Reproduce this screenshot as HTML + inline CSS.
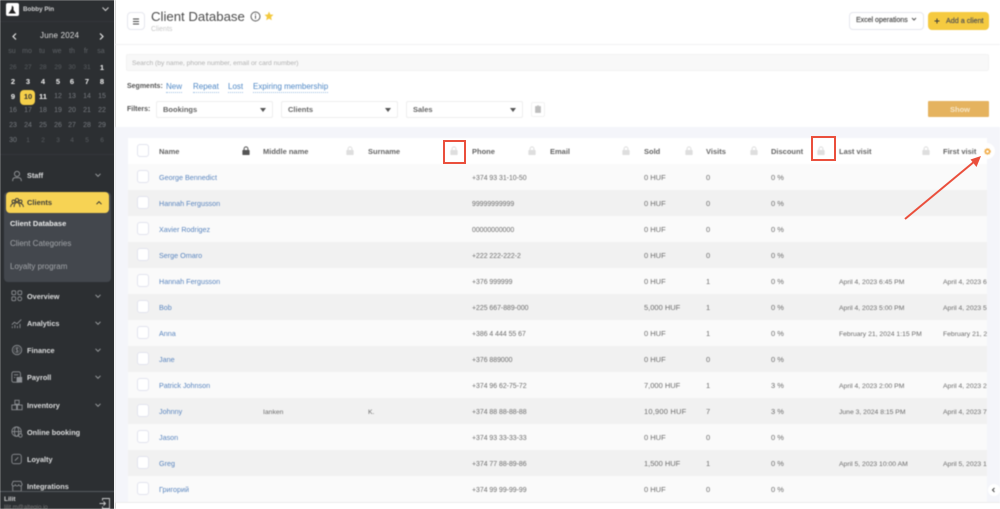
<!DOCTYPE html>
<html><head><meta charset="utf-8"><title>Client Database</title>
<style>
*{box-sizing:border-box;margin:0;padding:0}
html,body{width:1000px;height:509px;overflow:hidden;background:#fff}
body{font-family:"Liberation Sans","Noto Sans CJK SC",sans-serif;position:relative;color:#555}
.t{position:absolute;white-space:nowrap;line-height:12px}
#side{position:absolute;left:0;top:0;width:115px;height:509px;background:#2c2f32;overflow:hidden;filter:blur(.4px)}
#side .t{transform:translateY(-6px)}
.c{width:14px;text-align:center;font-size:7.5px;font-weight:bold;color:#f0f0f0}
.g{color:#777b80;font-weight:normal;font-size:7px}
.h{color:#5e6266;font-weight:normal;font-size:7px}
.m{color:#595d61;font-weight:normal;font-size:6.5px}
.n{font-size:7.3px;font-weight:bold;color:#dadbdc;left:27px;margin-top:1px}
.v{position:absolute;left:95px;width:6px;height:6px}
.ic{position:absolute;left:11px;width:12px;height:12px}
#main{position:absolute;left:0;top:0;width:1000px;height:509px;filter:blur(.4px)}
.row{position:absolute;left:128px;width:859px;height:26px;background:#fafafa;overflow:hidden}
.row.e{background:#f1f1f1}
.row .t{top:8px;font-size:7.5px;color:#6d6d6d}
.row .nm{color:#5b86bf;left:31px;font-size:7.2px}
.row .p{left:344px;font-size:6.9px;top:9px}
.row .d{font-size:6.8px;top:9px}
.cb{position:absolute;left:9px;top:6px;width:12px;height:13px;background:#fff;border:1px solid #e2e3ee;border-radius:3px}
.row .hd{font-size:7.5px;font-weight:bold;color:#666;top:8px}
.lk{position:absolute;top:8px;width:8px;height:9px}
.sel{position:absolute;top:101px;height:17px;background:#fff;border:1px solid #eee;border-radius:2px;font-size:7.5px;font-weight:bold;color:#666;padding:2px 6px;line-height:12px}
.sel i{position:absolute;right:6px;top:6px;border:3.5px solid transparent;border-top:4px solid #555;border-bottom:0}
.seg{position:absolute;top:81px;font-size:8px;color:#4f88c6;border-bottom:1px dotted #9fc0e2;line-height:11px;white-space:nowrap}
</style></head><body>
<svg width="0" height="0" style="position:absolute"><defs>
<symbol id="lock" viewBox="0 0 8 9"><path d="M1 4h6a.6.6 0 0 1 .6.6v3.800a.6.6 0 0 1-.6.6H1a.6.6 0 0 1-.6-.6V4.600A.6.6 0 0 1 1 4z" fill="currentColor"/><path d="M2.100 4V2.800a1.900 1.900 0 0 1 3.800 0V4" fill="none" stroke="currentColor" stroke-width="1"/></symbol>
<symbol id="dn" viewBox="0 0 6 6"><path d="M.5 1.800 3 4.300l2.500-2.500" fill="none" stroke="#9a9da0" stroke-width="1"/></symbol>
</defs></svg>

<div id="side">
<div style="position:absolute;left:6px;top:3px;width:13px;height:13px;background:#fff;border-radius:2px"></div>
<svg style="position:absolute;left:7px;top:4px" width="11" height="11" viewBox="0 0 11 11"><path d="M1.500 9.500 4.500 5l.5-3.500 1.500 1.500V6l2.500 3.500z" fill="#222"/></svg>
<div class="t" style="left:23px;top:10px;font-size:6.300px;font-weight:bold;color:#cfd0d1">Bobby Pin</div>
<svg style="position:absolute;left:102px;top:6px" width="7" height="6" viewBox="0 0 7 6"><path d="M.5 1.500 3.500 4.500 6.500 1.500" fill="none" stroke="#d0d0d0" stroke-width="1"/></svg>
<div style="position:absolute;left:0;top:21px;width:115px;height:1px;background:#33363a"></div>
<svg style="position:absolute;left:12px;top:33px" width="5" height="7" viewBox="0 0 5 7"><path d="M4 .5 1 3.500 4 6.500" fill="none" stroke="#e6e6e6" stroke-width="1.200"/></svg>
<div class="t" style="left:40px;top:36px;font-size:8px;color:#dcdcdc;letter-spacing:.2px">June 2024</div>
<svg style="position:absolute;left:99px;top:33px" width="5" height="7" viewBox="0 0 5 7"><path d="M1 .5 4 3.500 1 6.500" fill="none" stroke="#e6e6e6" stroke-width="1.200"/></svg>

<div class="t c h" style="left:5px;top:52px">su</div><div class="t c h" style="left:20px;top:52px">mo</div><div class="t c h" style="left:35px;top:52px">tu</div><div class="t c h" style="left:50px;top:52px">we</div><div class="t c h" style="left:65px;top:52px">th</div><div class="t c h" style="left:79px;top:52px">fr</div><div class="t c h" style="left:94px;top:52px">sa</div>

<div class="t c m" style="left:6px;top:68px">26</div><div class="t c m" style="left:21px;top:68px">27</div><div class="t c m" style="left:36px;top:68px">28</div><div class="t c m" style="left:51px;top:68px">29</div><div class="t c m" style="left:65px;top:68px">30</div><div class="t c m" style="left:80px;top:68px">31</div><div class="t c" style="left:95px;top:68px">1</div>

<div class="t c" style="left:6px;top:82px">2</div><div class="t c" style="left:21px;top:82px">3</div><div class="t c" style="left:36px;top:82px">4</div><div class="t c" style="left:51px;top:82px">5</div><div class="t c" style="left:65px;top:82px">6</div><div class="t c" style="left:80px;top:82px">7</div><div class="t c" style="left:95px;top:82px">8</div>

<div style="position:absolute;left:20px;top:90px;width:15px;height:15px;background:#f5cf4a;border-radius:4px"></div>
<div class="t c" style="left:6px;top:97px">9</div><div class="t c" style="left:21px;top:97px;color:#333">10</div><div class="t c" style="left:36px;top:97px">11</div><div class="t c g" style="left:51px;top:97px">12</div><div class="t c g" style="left:65px;top:97px">13</div><div class="t c g" style="left:80px;top:97px">14</div><div class="t c g" style="left:95px;top:97px">15</div>

<div class="t c g" style="left:6px;top:111px">16</div><div class="t c g" style="left:21px;top:111px">17</div><div class="t c g" style="left:36px;top:111px">18</div><div class="t c g" style="left:51px;top:111px">19</div><div class="t c g" style="left:65px;top:111px">20</div><div class="t c g" style="left:80px;top:111px">21</div><div class="t c g" style="left:95px;top:111px">22</div>

<div class="t c g" style="left:6px;top:126px">23</div><div class="t c g" style="left:21px;top:126px">24</div><div class="t c g" style="left:36px;top:126px">25</div><div class="t c g" style="left:51px;top:126px">26</div><div class="t c g" style="left:65px;top:126px">27</div><div class="t c g" style="left:80px;top:126px">28</div><div class="t c g" style="left:95px;top:126px">29</div>

<div class="t c g" style="left:6px;top:141px">30</div><div class="t c m" style="left:21px;top:141px">1</div><div class="t c m" style="left:36px;top:141px">2</div><div class="t c m" style="left:51px;top:141px">3</div><div class="t c m" style="left:65px;top:141px">4</div><div class="t c m" style="left:80px;top:141px">5</div><div class="t c m" style="left:95px;top:141px">6</div>
<div style="position:absolute;left:0;top:154px;width:115px;height:1px;background:#33363a"></div>

<svg class="ic" style="top:170px" viewBox="0 0 14 14" fill="none" stroke="#9a9da0"><circle cx="7" cy="4.500" r="3"/><path d="M2 13v-1.500A3 3 0 0 1 5 9h4a3 3 0 0 1 3 3v1"/></svg>
<div class="t n" style="top:175px">Staff</div><svg class="v" style="top:172px"><use href="#dn"/></svg>

<div style="position:absolute;left:4px;top:192px;width:107px;height:90px;background:#43474d;border-radius:4px"></div>
<div style="position:absolute;left:6px;top:192px;width:103px;height:21px;background:#f7d354;border-radius:4px"></div>
<svg style="position:absolute;left:10px;top:196px;width:14px;height:14px" viewBox="0 0 14 14" fill="none" stroke="#3a3a3a" stroke-width=".9"><circle cx="3.500" cy="5.500" r="1.500"/><circle cx="7" cy="4" r="1.600"/><circle cx="10.500" cy="5.500" r="1.500"/><path d="M.5 11c.5-2.500 1.500-3.500 3-3.500M13.500 11c-.5-2.500-1.500-3.500-3-3.500M4 11c.3-3 1.500-4.500 3-4.500s2.700 1.500 3 4.500"/></svg>
<div class="t" style="left:27px;top:203px;font-size:7.500px;font-weight:bold;color:#3c3c38">Clients</div>
<svg style="position:absolute;left:96px;top:200px" width="6" height="6" viewBox="0 0 6 6"><path d="M.5 4.200 3 1.700l2.500 2.500" fill="none" stroke="#333" stroke-width="1"/></svg>
<div class="t" style="left:10px;top:223.500px;font-size:7.500px;font-weight:bold;color:#eceded">Client Database</div>
<div class="t" style="left:10px;top:244px;font-size:8px;color:#a2a5a9">Client Categories</div>
<div class="t" style="left:10px;top:267px;font-size:8px;color:#a2a5a9">Loyalty program</div>

<svg class="ic" style="top:290px" viewBox="0 0 14 14" fill="none" stroke="#8f9296"><rect x="1" y="1" width="4.500" height="4.500" rx="1.200"/><rect x="8" y="1" width="4.500" height="4.500" rx="1.200"/><rect x="1" y="8" width="4.500" height="4.500" rx="1.200"/><circle cx="10.200" cy="10.200" r="2.300"/></svg>
<div class="t n" style="top:296px">Overview</div><svg class="v" style="top:293px"><use href="#dn"/></svg>

<svg class="ic" style="top:317px" viewBox="0 0 14 14" fill="none" stroke="#8f9296"><path d="M1 9l3-3 3 2 5-5M1.500 13v-2M4.500 13V9M7.500 13v-2.500M10.500 13V8"/></svg>
<div class="t n" style="top:323px">Analytics</div><svg class="v" style="top:320px"><use href="#dn"/></svg>

<svg class="ic" style="top:344px" viewBox="0 0 14 14" fill="none" stroke="#8f9296"><circle cx="7" cy="7" r="5.500"/><circle cx="7" cy="7" r="3.500" stroke-width=".5"/><path d="M8.300 5.500C8 4.800 6 4.500 5.800 5.800 5.600 7.300 8.400 6.700 8.300 8.200 8.100 9.500 6 9.200 5.600 8.500M7 4v6" stroke-width=".7"/></svg>
<div class="t n" style="top:350px">Finance</div><svg class="v" style="top:347px"><use href="#dn"/></svg>

<svg class="ic" style="top:371px" viewBox="0 0 14 14" fill="none" stroke="#8f9296"><rect x="1" y="1" width="10" height="12" rx="2"/><rect x="7" y="7.500" width="5.500" height="5.500" fill="#8f9296"/><path d="M3.500 4.500h5M3.500 7.500h1.500"/></svg>
<div class="t n" style="top:377px">Payroll</div><svg class="v" style="top:374px"><use href="#dn"/></svg>

<svg class="ic" style="top:399px" viewBox="0 0 14 14" fill="none" stroke="#8f9296"><rect x="4.500" y="1.500" width="5" height="4.500"/><rect x="1" y="7" width="5.500" height="5.500"/><rect x="7.500" y="7" width="5.500" height="5.500"/></svg>
<div class="t n" style="top:405px">Inventory</div><svg class="v" style="top:402px"><use href="#dn"/></svg>

<svg class="ic" style="top:426px" viewBox="0 0 14 14" fill="none" stroke="#8f9296"><circle cx="6.500" cy="6.500" r="5.500"/><ellipse cx="6.500" cy="6.500" rx="2.500" ry="5.500"/><path d="M1 6.500h11"/><circle cx="11" cy="11" r="2" fill="#2c2f32"/></svg>
<div class="t n" style="top:432px">Online booking</div>

<svg class="ic" style="top:453px" viewBox="0 0 14 14" fill="none" stroke="#8f9296"><rect x="1" y="1.500" width="11" height="11" rx="2.500"/><path d="M4.500 9 8.500 5M4.700 5.200h.1M8.300 8.800h.1"/></svg>
<div class="t n" style="top:459px">Loyalty</div>

<svg class="ic" style="top:480px" viewBox="0 0 14 14" fill="none" stroke="#8f9296"><path d="M2 6v7h10V6M1 5l1.500-3.500h9L13 5a2 2 0 0 1-4 0 2 2 0 0 1-4 0 2 2 0 0 1-4 0z"/></svg>
<div class="t n" style="top:486px">Integrations</div>

<div style="position:absolute;left:0;top:491px;width:115px;height:18px;background:#2c2f32;border-top:1px solid #565a5e"></div>
<div class="t" style="left:4px;top:500px;font-size:6.500px;font-weight:bold;color:#cfd0d1">Lilit</div>
<div class="t" style="left:4px;top:508px;font-size:6px;color:#777">lilit.m@altegio.io</div>
<svg style="position:absolute;left:99px;top:498px" width="11" height="11" viewBox="0 0 11 11" fill="none" stroke="#c8c9ca" stroke-width=".9"><path d="M3.500 2.500V.5h7v10h-7V8.500M.5 5.500h6M4.500 3.500l2 2-2 2"/></svg>
</div>
<div style="position:absolute;left:114px;top:0;width:1px;height:509px;background:#f3f3f3"></div>

<div id="main">
<div style="position:absolute;left:127px;top:12px;width:18px;height:18px;background:#fff;border:1px solid #e6e7ee;border-radius:4px"></div>
<svg style="position:absolute;left:132px;top:18px" width="8" height="7" viewBox="0 0 8 7"><path d="M1 1h6M1 3.500h6M1 6h6" stroke="#444" stroke-width="1.100"/></svg>
<div class="t" style="left:151px;top:10px;font-size:13.200px;line-height:13px;color:#4c4c4c">Client Database</div>
<svg style="position:absolute;left:250px;top:11px" width="11" height="11" viewBox="0 0 11 11" fill="none" stroke="#5a5a5a"><circle cx="5.500" cy="5.500" r="4.500"/><path d="M5.500 4.500v3.200M5.500 2.800v1"/></svg>
<svg style="position:absolute;left:264px;top:11px" width="10" height="10" viewBox="0 0 10 10"><path d="M5 .5 6.300 3.500 9.500 3.800 7.100 6 7.800 9.300 5 7.600 2.200 9.300 2.900 6 .5 3.800 3.700 3.500z" fill="#f3c93e"/></svg>
<div class="t" style="left:151px;top:24px;font-size:7px;color:#c8c8c8">Clients</div>

<div style="position:absolute;left:849px;top:12px;width:75px;height:18px;background:#fff;border:1px solid #e6e7ee;border-radius:4px"></div>
<div class="t" style="left:856px;top:15px;font-size:7px;color:#555;-webkit-text-stroke:.2px #555">Excel operations</div>
<svg style="position:absolute;left:911px;top:17px" width="6" height="5" viewBox="0 0 6 5"><path d="M1 1l2 2 2-2" fill="none" stroke="#555"/></svg>
<div style="position:absolute;left:928px;top:12px;width:61px;height:18px;background:#f5ca40;border-radius:4px"></div>
<svg style="position:absolute;left:934px;top:18px" width="6" height="6" viewBox="0 0 6 6"><path d="M3 .5v5M.5 3h5" stroke="#3c3c3c" stroke-width="1"/></svg>
<div class="t" style="left:946px;top:15px;font-size:7.200px;color:#555;-webkit-text-stroke:.2px #555">Add a client</div>
<div style="position:absolute;left:115px;top:44px;width:885px;height:1px;background:#f1f1f4"></div>

<div style="position:absolute;left:126px;top:54px;width:863px;height:17px;background:#f8f8f8;border:1px solid #f3f3f3;border-radius:2px"></div>
<div class="t" style="left:132px;top:58px;font-size:6.700px;color:#b2b2b2">Search (by name, phone number, email or card number)</div>

<div class="t" style="left:127px;top:80.500px;font-size:7px;font-weight:bold;color:#555">Segments:</div>
<div class="seg" style="left:166px">New</div>
<div class="seg" style="left:193px">Repeat</div>
<div class="seg" style="left:228px">Lost</div>
<div class="seg" style="left:253px">Expiring membership</div>

<div class="t" style="left:127px;top:103.500px;font-size:7px;font-weight:bold;color:#555">Filters:</div>
<div class="sel" style="left:156px;width:117px">Bookings<i></i></div>
<div class="sel" style="left:281px;width:117px">Clients<i></i></div>
<div class="sel" style="left:406px;width:117px">Sales<i></i></div>
<div style="position:absolute;left:531px;top:102px;width:14px;height:15px;background:#fff;border:1px solid #f2f2f2;border-radius:2px"></div>
<svg style="position:absolute;left:535px;top:105px" width="6" height="8" viewBox="0 0 6 8"><path d="M.5 1.500h5v6h-5zM2 .7h2" fill="#bdbdbd" stroke="#bdbdbd" stroke-width=".7"/></svg>
<div style="position:absolute;left:928px;top:101px;width:61px;height:16px;background:#e5b35f;border-radius:1px"></div>
<div class="t" style="left:950px;top:104px;font-size:7.500px;font-weight:bold;color:#f5e6c8">Show</div>

<div style="position:absolute;left:115px;top:127px;width:885px;height:375px;background:#f4f5fa"></div>
<div style="position:absolute;left:115px;top:502px;width:885px;height:1px;background:#ececec"></div>

<div class="row" style="top:138px;background:#fff">
<div class="cb"></div>
<div class="t hd" style="left:31px">Name</div>
<svg class="lk" style="left:114px;color:#555"><use href="#lock"/></svg>
<div class="t hd" style="left:135px">Middle name</div>
<svg class="lk" style="left:218px;color:#dedede"><use href="#lock"/></svg>
<div class="t hd" style="left:240px">Surname</div>
<svg class="lk" style="left:322px;color:#dedede"><use href="#lock"/></svg>
<div class="t hd" style="left:344px">Phone</div>
<svg class="lk" style="left:400px;color:#dedede"><use href="#lock"/></svg>
<div class="t hd" style="left:422px">Email</div>
<svg class="lk" style="left:494px;color:#dedede"><use href="#lock"/></svg>
<div class="t hd" style="left:516px">Sold</div>
<svg class="lk" style="left:557px;color:#dedede"><use href="#lock"/></svg>
<div class="t hd" style="left:578px">Visits</div>
<svg class="lk" style="left:622px;color:#dedede"><use href="#lock"/></svg>
<div class="t hd" style="left:643px">Discount</div>
<svg class="lk" style="left:689px;color:#dedede"><use href="#lock"/></svg>
<div class="t hd" style="left:711px">Last visit</div>
<svg class="lk" style="left:794px;color:#dedede"><use href="#lock"/></svg>
<div class="t hd" style="left:815px">First visit</div>
</div>

<div class="row" style="top:164px"><div class="cb"></div><div class="t nm">George Bennedict</div><div class="t p">+374 93 31-10-50</div><div class="t" style="left:516px">0 HUF</div><div class="t" style="left:578px">0</div><div class="t" style="left:643px">0 %</div></div>
<div class="row e" style="top:190px"><div class="cb"></div><div class="t nm">Hannah Fergusson</div><div class="t p">99999999999</div><div class="t" style="left:516px">0 HUF</div><div class="t" style="left:578px">0</div><div class="t" style="left:643px">0 %</div></div>
<div class="row" style="top:216px"><div class="cb"></div><div class="t nm">Xavier Rodrigez</div><div class="t p">00000000000</div><div class="t" style="left:516px">0 HUF</div><div class="t" style="left:578px">0</div><div class="t" style="left:643px">0 %</div></div>
<div class="row e" style="top:242px"><div class="cb"></div><div class="t nm">Serge Omaro</div><div class="t p">+222 222-222-2</div><div class="t" style="left:516px">0 HUF</div><div class="t" style="left:578px">0</div><div class="t" style="left:643px">0 %</div></div>
<div class="row" style="top:268px"><div class="cb"></div><div class="t nm">Hannah Fergusson</div><div class="t p">+376 999999</div><div class="t" style="left:516px">0 HUF</div><div class="t" style="left:578px">1</div><div class="t" style="left:643px">0 %</div><div class="t d" style="left:711px">April 4, 2023 6:45 PM</div><div class="t d" style="left:815px">April 4, 2023 6:45 PM</div></div>
<div class="row e" style="top:294px"><div class="cb"></div><div class="t nm">Bob</div><div class="t p">+225 667-889-000</div><div class="t" style="left:516px">5,000 HUF</div><div class="t" style="left:578px">1</div><div class="t" style="left:643px">0 %</div><div class="t d" style="left:711px">April 4, 2023 5:00 PM</div><div class="t d" style="left:815px">April 4, 2023 5:00 PM</div></div>
<div class="row" style="top:320px"><div class="cb"></div><div class="t nm">Anna</div><div class="t p">+386 4 444 55 67</div><div class="t" style="left:516px">0 HUF</div><div class="t" style="left:578px">1</div><div class="t" style="left:643px">0 %</div><div class="t d" style="left:711px">February 21, 2024 1:15 PM</div><div class="t d" style="left:815px">February 21, 2024 1:15 PM</div></div>
<div class="row e" style="top:346px"><div class="cb"></div><div class="t nm">Jane</div><div class="t p">+376 889000</div><div class="t" style="left:516px">0 HUF</div><div class="t" style="left:578px">0</div><div class="t" style="left:643px">0 %</div></div>
<div class="row" style="top:372px"><div class="cb"></div><div class="t nm">Patrick Johnson</div><div class="t p">+374 96 62-75-72</div><div class="t" style="left:516px">7,000 HUF</div><div class="t" style="left:578px">1</div><div class="t" style="left:643px">3 %</div><div class="t d" style="left:711px">April 4, 2023 2:00 PM</div><div class="t d" style="left:815px">April 4, 2023 2:00 PM</div></div>
<div class="row e" style="top:398px"><div class="cb"></div><div class="t nm">Johnny</div><div class="t d" style="left:135px">Ianken</div><div class="t d" style="left:240px">K.</div><div class="t p">+374 88 88-88-88</div><div class="t" style="left:516px;letter-spacing:.2px">10,900 HUF</div><div class="t" style="left:578px">7</div><div class="t" style="left:643px">3 %</div><div class="t d" style="left:711px">June 3, 2024 8:15 PM</div><div class="t d" style="left:815px">April 4, 2023 7:00 PM</div></div>
<div class="row" style="top:424px"><div class="cb"></div><div class="t nm">Jason</div><div class="t p">+374 93 33-33-33</div><div class="t" style="left:516px">0 HUF</div><div class="t" style="left:578px">0</div><div class="t" style="left:643px">0 %</div></div>
<div class="row e" style="top:450px"><div class="cb"></div><div class="t nm">Greg</div><div class="t p">+374 77 88-89-86</div><div class="t" style="left:516px">1,500 HUF</div><div class="t" style="left:578px">1</div><div class="t" style="left:643px">0 %</div><div class="t d" style="left:711px">April 5, 2023 10:00 AM</div><div class="t d" style="left:815px">April 5, 2023 10:00 AM</div></div>
<div class="row" style="top:476px"><div class="cb"></div><div class="t nm">Григорий</div><div class="t p">+374 99 99-99-99</div><div class="t" style="left:516px">0 HUF</div><div class="t" style="left:578px">0</div><div class="t" style="left:643px">0 %</div></div>

<div style="position:absolute;left:979px;top:143px;width:16px;height:16px;background:#fff;border-radius:50%"></div>
<svg style="position:absolute;left:984px;top:148px" width="7" height="7" viewBox="0 0 8 8"><circle cx="4" cy="4" r="2.300" fill="none" stroke="#f0a73c" stroke-width="1.600"/><circle cx="4" cy="4" r="3.400" fill="none" stroke="#f0a73c" stroke-width=".9" stroke-dasharray="1.200 1.200"/></svg>
<div style="position:absolute;left:988px;top:484px;width:12px;height:12px;background:#fff;border-radius:50%"></div>
<svg style="position:absolute;left:991px;top:487px" width="5" height="6" viewBox="0 0 5 6"><path d="M3.500 1 1.500 3l2 2" fill="none" stroke="#444"/></svg>
</div>

<svg style="position:absolute;left:0;top:0" width="1000" height="509" viewBox="0 0 1000 509">
<rect x="444" y="141" width="21" height="22" fill="none" stroke="#ea4f3c" stroke-width="2"/>
<rect x="812" y="137" width="23" height="23" fill="none" stroke="#ea4f3c" stroke-width="2"/>
<path d="M905 219 975 161" stroke="#ea4f3c" stroke-width="2" fill="none"/>
<path d="M981 156 970.500 159.500 976.500 167z" fill="#ea4f3c"/>
</svg>
</body></html>
